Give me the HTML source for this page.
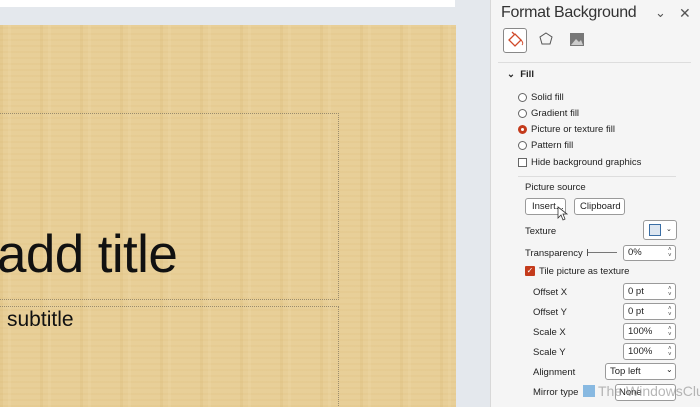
<!DOCTYPE html>
<html><head><style>
*{margin:0;padding:0;box-sizing:border-box}
html,body{width:700px;height:407px;overflow:hidden}
body{background:#e4e8ed;font-family:"Liberation Sans",sans-serif;position:relative;font-size:10px;color:#222}
.a{position:absolute}
.slide{left:0;top:25px;width:456px;height:382px;background:#e8cf98;overflow:hidden;
background-image:repeating-linear-gradient(90deg,rgba(200,160,80,.12) 0 3px,transparent 3px 8px,rgba(255,240,200,.10) 8px 11px,transparent 11px 40px),repeating-linear-gradient(0deg,rgba(200,160,80,.08) 0 2px,transparent 2px 6px);}
.ruler{left:0;top:0;width:455px;height:7px;background:#fff}
.panel{left:490px;top:0;width:210px;height:407px;background:#f5f5f5;border-left:1px solid #d8d8d8;overflow:hidden}
.t{position:absolute;white-space:nowrap;font-size:9.5px;color:#222}
.rad{position:absolute;width:9px;height:9px;border:1px solid #666;border-radius:50%;background:#fff}
.box{position:absolute;border:1px solid #9a9a9a;border-radius:3px;background:#fff}
.sp{position:absolute;right:4px;font-size:6px;color:#444;line-height:6px}
</style></head><body>
<div class="a ruler"></div>
<div class="a slide">
<div class="a" style="left:0;top:88px;width:339px;height:187px;border-top:1px dotted #9b8c6c;border-right:1px dotted #9b8c6c;border-bottom:1px dotted #9b8c6c"></div>
<div class="a" style="left:0;top:281px;width:339px;height:110px;border-top:1px dotted #9b8c6c;border-right:1px dotted #9b8c6c"></div>
<div class="a" style="left:-3px;top:199px;font-size:53px;color:#111;white-space:nowrap;letter-spacing:-0.6px">add title</div>
<div class="a" style="left:7px;top:283px;font-size:21px;color:#111">subtitle</div>
</div>
<div class="a panel">
<div class="t" style="left:10px;top:4px;font-size:16px;color:#333;letter-spacing:-0.3px">Format Background</div>
<div class="t" style="left:164px;top:5px;font-size:13px;color:#555">&#8964;</div>
<div class="t" style="left:188px;top:5px;font-size:14px;color:#555">✕</div>
<div class="a" style="left:12px;top:28px;width:24px;height:25px;border:1px solid #888;border-radius:3px;background:#fff"></div>
<svg class="a" style="left:15px;top:31px" width="20" height="18"><path d="M3 9 L9 3 L15 9 L9 15 Z M8 3 L6 1" stroke="#d04a2a" stroke-width="1.3" fill="none"/><path d="M15 9 Q18 12 16 14" stroke="#d04a2a" fill="none"/></svg>
<svg class="a" style="left:47px;top:31px" width="16" height="16"><path d="M8 2 L14 6 L12 13 L4 13 L2 6 Z" stroke="#555" fill="none"/></svg>
<svg class="a" style="left:78px;top:32px" width="16" height="15"><rect x="1" y="1" width="14" height="13" fill="#777"/><path d="M2 13 L7 7 L10 10 L12 8 L14 13Z" fill="#ccc"/></svg>
<div class="a" style="left:7px;top:62px;width:193px;border-top:1px solid #ddd"></div>
<div class="t" style="left:16px;top:69px;font-weight:bold">&#8964;&nbsp; Fill</div>
<div class="rad" style="left:27px;top:93px"></div><div class="t" style="left:40px;top:92px">Solid fill</div>
<div class="rad" style="left:27px;top:109px"></div><div class="t" style="left:40px;top:108px">Gradient fill</div>
<div class="rad" style="left:27px;top:125px;border:3px solid #c43b1c"></div><div class="t" style="left:40px;top:124px">Picture or texture fill</div>
<div class="rad" style="left:27px;top:141px"></div><div class="t" style="left:40px;top:140px">Pattern fill</div>
<div class="a" style="left:27px;top:158px;width:9px;height:9px;border:1px solid #666;background:#fff"></div><div class="t" style="left:40px;top:157px">Hide background graphics</div>
<div class="a" style="left:27px;top:176px;width:158px;border-top:1px solid #ddd"></div>
<div class="t" style="left:34px;top:182px">Picture source</div>
<div class="box" style="left:34px;top:198px;width:41px;height:17px"></div><div class="t" style="left:41px;top:201px">Insert...</div>
<div class="box" style="left:83px;top:198px;width:51px;height:17px"></div><div class="t" style="left:89px;top:201px">Clipboard</div>
<svg class="a" style="left:66px;top:206px" width="12" height="16"><path d="M1 1 L1 12 L4 9 L6 14 L8 13 L6 8 L10 8 Z" fill="#fff" stroke="#333" stroke-width=".8"/></svg>
<div class="t" style="left:34px;top:226px">Texture</div>
<div class="box" style="left:152px;top:220px;width:34px;height:20px"></div>
<div class="a" style="left:158px;top:224px;width:12px;height:12px;border:1px solid #3a6ea5;background:#dde6f0"></div><div class="t" style="left:175px;top:225px;font-size:7px">&#8964;</div>
<div class="t" style="left:34px;top:248px">Transparency</div>
<div class="a" style="left:96px;top:252px;width:30px;border-top:1px solid #777"></div><div class="a" style="left:96px;top:249px;height:7px;border-left:1px solid #555"></div>
<div class="box" style="left:132px;top:245px;width:53px;height:16px"></div><div class="t" style="left:137px;top:247px">0%</div><div class="sp" style="left:177px;top:247px">˄<br>˅</div>
<div class="a" style="left:34px;top:266px;width:10px;height:10px;background:#c43b1c;border-radius:1px;color:#fff;font-size:8px;line-height:10px;text-align:center">✓</div>
<div class="t" style="left:48px;top:266px">Tile picture as texture</div>
<div class="t" style="left:42px;top:287px">Offset X</div>
<div class="t" style="left:42px;top:307px">Offset Y</div>
<div class="t" style="left:42px;top:327px">Scale X</div>
<div class="t" style="left:42px;top:347px">Scale Y</div>
<div class="box" style="left:132px;top:283px;width:53px;height:17px"></div><div class="t" style="left:137px;top:286px">0 pt</div><div class="sp" style="left:177px;top:286px">˄<br>˅</div>
<div class="box" style="left:132px;top:303px;width:53px;height:17px"></div><div class="t" style="left:137px;top:306px">0 pt</div><div class="sp" style="left:177px;top:306px">˄<br>˅</div>
<div class="box" style="left:132px;top:323px;width:53px;height:17px"></div><div class="t" style="left:137px;top:326px">100%</div><div class="sp" style="left:177px;top:326px">˄<br>˅</div>
<div class="box" style="left:132px;top:343px;width:53px;height:17px"></div><div class="t" style="left:137px;top:346px">100%</div><div class="sp" style="left:177px;top:346px">˄<br>˅</div>
<div class="t" style="left:42px;top:367px">Alignment</div>
<div class="box" style="left:114px;top:363px;width:71px;height:17px"></div><div class="t" style="left:119px;top:366px">Top left</div><div class="t" style="left:175px;top:365px;font-size:8px">&#8964;</div>
<div class="t" style="left:42px;top:387px">Mirror type</div>
<div class="box" style="left:124px;top:384px;width:61px;height:17px"></div><div class="t" style="left:128px;top:387px">None</div>
<div class="a" style="left:92px;top:385px;width:12px;height:12px;background:#5aa0d8;opacity:.7"></div>
<div class="t" style="left:107px;top:383px;font-size:14px;color:#999;opacity:.7">The WindowsClub</div>
</div>
</body></html>
